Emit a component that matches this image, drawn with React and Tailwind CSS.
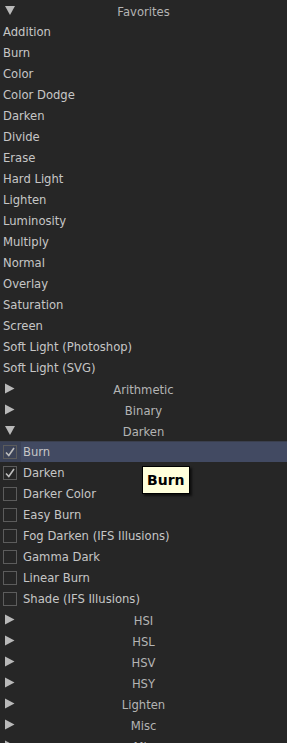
const favorites = [
  "Addition",
  "Burn",
  "Color",
  "Color Dodge",
  "Darken",
  "Divide",
  "Erase",
  "Hard Light",
  "Lighten",
  "Luminosity",
  "Multiply",
  "Normal",
  "Overlay",
  "Saturation",
  "Screen",
  "Soft Light (Photoshop)",
  "Soft Light (SVG)",
]

const darken = [
  { name: "Burn", checked: true, selected: true },
  { name: "Darken", checked: true },
  { name: "Darker Color" },
  { name: "Easy Burn" },
  { name: "Fog Darken (IFS Illusions)" },
  { name: "Gamma Dark" },
  { name: "Linear Burn" },
  { name: "Shade (IFS Illusions)" },
]

function Arrow({ open }) {
  return (
    <svg width="12" height="11" viewBox="0 0 12 11" className="shrink-0">
      {open ? (
        <polygon points="1,1 11,1 6,10" fill="#b9b9b9" />
      ) : (
        <polygon points="1,0.5 10.5,5.5 1,10.5" fill="#b9b9b9" />
      )}
    </svg>
  )
}

function Group({ label, open }) {
  return (
    <div className="relative flex items-center h-[21px] pl-[4px]">
      <Arrow open={open} />
      <span className="absolute inset-x-0 top-[5px] leading-[14px] text-center text-[#b4b4b4]">{label}</span>
    </div>
  )
}

function Check({ checked }) {
  return (
    <div className="w-[14px] h-[14px] border border-[#5c5c5c] flex items-center justify-center shrink-0">
      {checked && (
        <svg width="12" height="12" viewBox="0 0 12 12">
          <path d="M2 6.5 L4.8 9.5 L10 2" stroke="#bdbdbd" strokeWidth="1.6" fill="none" />
        </svg>
      )}
    </div>
  )
}

export default function App() {
  return (
    <div
      className="relative w-[287px] h-[743px] overflow-hidden bg-[#262626] text-[11.6px] text-[#c6c6c6]"
      style={{ fontFamily: '"DejaVu Sans", sans-serif' }}
    >
      <Group label="Favorites" open />
      {favorites.map((f) => (
        <div key={f} className="h-[21px] flex items-center pl-[3px] pt-[2px]">
          {f}
        </div>
      ))}
      <Group label="Arithmetic" />
      <Group label="Binary" />
      <Group label="Darken" open />
      {darken.map((d) => (
        <div
          key={d.name}
          className={
            d.selected
              ? "h-[21px] flex items-center bg-[#424a62] border-t border-[#3a3f4e]"
              : "h-[21px] flex items-center"
          }
        >
          <div
            className={
              d.selected
                ? "w-[21px] h-full flex items-center pl-[3px] bg-[#3b4257]"
                : "w-[21px] h-full flex items-center pl-[3px]"
            }
          >
            <Check checked={d.checked} />
          </div>
          <span className="pl-[2px] pt-[2px]">{d.name}</span>
        </div>
      ))}
      <Group label="HSI" />
      <Group label="HSL" />
      <Group label="HSV" />
      <Group label="HSY" />
      <Group label="Lighten" />
      <Group label="Misc" />
      <Group label="Mix" />
      <div className="absolute left-[142px] top-[466px] px-[4px] h-[28px] flex items-center bg-[#ffffdc] border border-black shadow-[2px_2px_2px_rgba(0,0,0,0.6)] text-black text-[14px] font-bold">
        Burn
      </div>
    </div>
  )
}
